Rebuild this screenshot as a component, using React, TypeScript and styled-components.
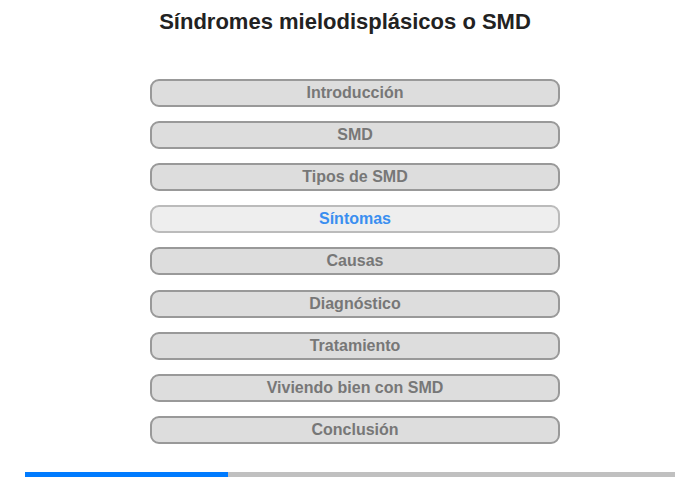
import React from "react";
import styled, { createGlobalStyle } from "styled-components";

const Global = createGlobalStyle`
  html, body { margin: 0; padding: 0; background: #fff; }
  body { font-family: "Liberation Sans", Arial, sans-serif; }
`;

const Page = styled.div`
  width: 700px;
  height: 480px;
  box-sizing: border-box;
  padding: 0 25px;
  display: flex;
  flex-direction: column;
`;

const Title = styled.h1`
  margin: 9px 0 0;
  padding-right: 10px;
  font-size: 22px;
  line-height: 26px;
  font-weight: bold;
  color: #222;
  text-align: center;
`;

const Menu = styled.nav`
  margin-top: 44px;
  padding-left: 10px;
  display: flex;
  flex-direction: column;
  align-items: center;
  gap: 14.12px;
`;

const Item = styled.div<{ $active?: boolean }>`
  width: 410px;
  height: 28px;
  box-sizing: border-box;
  border: 2px solid ${(p) => (p.$active ? "#bbb" : "#999")};
  border-radius: 9px;
  background: ${(p) => (p.$active ? "#eee" : "#ddd")};
  color: ${(p) => (p.$active ? "#3a8ef0" : "#777")};
  font-size: 16px;
  font-weight: bold;
  display: flex;
  align-items: center;
  justify-content: center;
`;

const Track = styled.div`
  margin-top: auto;
  margin-bottom: 3px;
  height: 5px;
  background: #c0c0c0;
  display: flex;
`;

const Fill = styled.div`
  height: 100%;
  background: #007bff;
`;

const items = [
  "Introducción",
  "SMD",
  "Tipos de SMD",
  "Síntomas",
  "Causas",
  "Diagnóstico",
  "Tratamiento",
  "Viviendo bien con SMD",
  "Conclusión",
];

export default function App() {
  return (
    <Page>
      <Global />
      <Title>Síndromes mielodisplásicos o SMD</Title>
      <Menu>
        {items.map((t, i) => (
          <Item key={t} $active={i === 3}>
            {t}
          </Item>
        ))}
      </Menu>
      <Track>
        <Fill style={{ width: `${(203 / 650) * 100}%` }} />
      </Track>
    </Page>
  );
}
